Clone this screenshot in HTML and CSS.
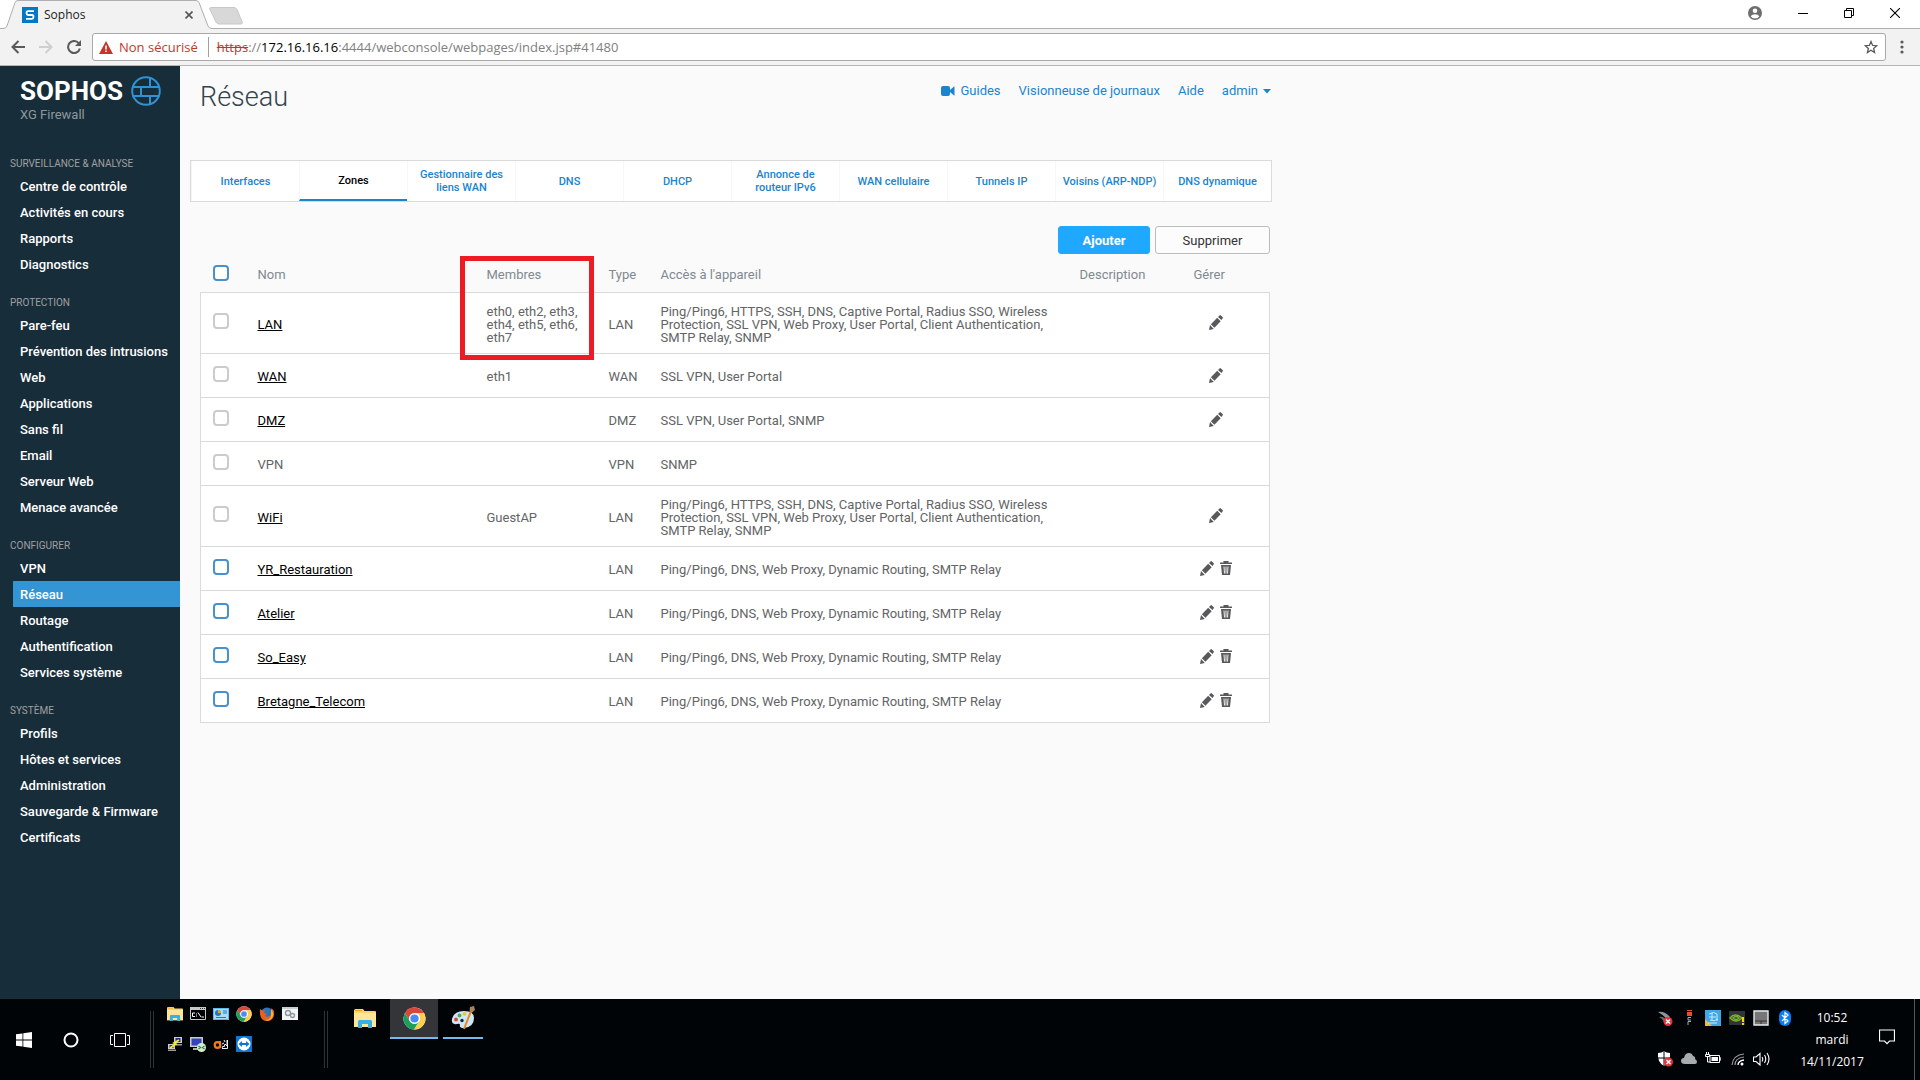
FILE: index.html
```html
<!DOCTYPE html>
<html lang="fr">
<head>
  <meta charset="UTF-8">
  <meta name="viewport" content="width=device-width, initial-scale=1.0">
  <title>Sophos</title>
  <link rel="stylesheet" href="styles.css">
</head>
<body>
  <svg class="defs" aria-hidden="true">
    <symbol id="pencil" viewBox="0 0 14 15"><path d="M0 15l1-5 3.800 4zM1.900 9.200l6.300-6.500 3.500 3.500-6.300 6.500zM9 1.900L10.500.4q.7-.6 1.400 0l1.700 1.700q.6.700 0 1.300L12.400 5z" fill="#58595b"/></symbol>
    <symbol id="trash" viewBox="0 0 12 14"><path d="M0 1.500h3.500V0h5v1.500H12V3H0z" fill="#58595b"/><path d="M1 4h10l-1 10H2z" fill="#58595b"/><path d="M4 5.500l.5 7M6 5.500v7M8 5.500l-.5 7" stroke="#fff" stroke-width=".9"/></symbol>
    <symbol id="chrome" viewBox="0 0 24 24"><circle cx="12" cy="12" r="11.500" fill="#fff"/><path d="M2 6.200A11.500 11.500 0 0 1 22 6.500H12A5.500 5.500 0 0 0 7 14.500z" fill="#d9463b"/><path d="M22 6.500A11.500 11.500 0 0 1 11.500 23.500L16.800 14.800A5.500 5.500 0 0 0 14.500 6.500z" fill="#fcd04b"/><path d="M2 6.200A11.500 11.500 0 0 0 11.500 23.500L16.500 15.200A5.500 5.500 0 0 1 7.200 14.800z" fill="#1d9e5a"/><circle cx="12" cy="12" r="5.500" fill="#fff"/><circle cx="12" cy="12" r="4.300" fill="#4a8af4"/></symbol>
    <symbol id="folder" viewBox="0 0 22 19"><path d="M0 1.500Q0 0 1.500 0H9l1.500 2H21q1 0 1 1v15H0z" fill="#fbd56b"/><path d="M0 4h22v14H0z" fill="#fde69a"/><path d="M1 1.500h7" stroke="#e5a91e"/><path d="M4 19v-6.500Q4 11 5.500 11h11q1.500 0 1.500 1.500V19h-4v-4H8v4z" fill="#35b1e8"/></symbol>
  </svg>

  <header class="browser">
    <div class="tabstrip">
      <svg class="tabshape" width="250" height="29" viewBox="0 0 250 29"><path d="M0 28.500H3Q6 28.500 7 26L16 2.500Q17 .5 19 .5H161Q163 .5 164 2.500L172 26Q173 28.500 176 28.500H250V29H0z" fill="none"/><path d="M0 28.500H3Q6 28.500 7 26L15 2.500Q16 .5 18 .5H196Q198 .5 199 2.500L208 26Q209 28.500 212 28.500V29H0z" fill="#f2f2f2"/><path d="M0 28.500H3Q6 28.500 7 26L15 2.500Q16 .5 18 .5H196Q198 .5 199 2.500L208 26Q209 28.500 212 28.500H250" fill="none" stroke="#afafaf"/><path d="M211 7.500h23q2 0 3 2l5 12q1 2.500-1 2.500h-22q-2 0-3-2l-6-12.500q-1-2 1-2z" fill="#d8d8d8" stroke="#c8c8c8"/></svg>
      <div class="tab">
        <svg width="16" height="16" viewBox="0 0 16 16"><path fill="#0078c8" d="M0 0h16v16H0z"/><path d="M12 4.200H6Q4.500 4.200 4.500 6T6 8h4q1.500 0 1.500 1.800T10 11.800H4" fill="none" stroke="#fff" stroke-width="1.800"/></svg>
        <span class="tab-title">Sophos</span>
        <button class="plain" aria-label="Fermer l'onglet"><svg width="8" height="8" viewBox="0 0 8 8"><path d="M.5.5l7 7M7.500.5l-7 7" stroke="#555" stroke-width="1.600"/></svg></button>
      </div>
      <div class="window-buttons">
        <button class="plain" aria-label="Profil"><svg width="14" height="14" viewBox="0 0 14 14"><circle cx="7" cy="7" r="7" fill="#6e6e6e"/><circle cx="7" cy="4.800" r="2.300" fill="#fff"/><path d="M2.600 10.200Q4 8.200 7 8.200T11.400 10.200Q9.800 12.400 7 12.400T2.600 10.200z" fill="#fff"/></svg></button>
        <button class="plain" aria-label="Réduire"><svg width="10" height="10" viewBox="0 0 10 10"><path d="M0 5.500h10" stroke="#000"/></svg></button>
        <button class="plain" aria-label="Restaurer"><svg width="10" height="10" viewBox="0 0 10 10"><path d="M.5 2.500h7v7h-7zM2.500 2.500v-2h7v7h-2" fill="none" stroke="#000"/></svg></button>
        <button class="plain" aria-label="Fermer"><svg width="10" height="10" viewBox="0 0 10 10"><path d="M0 0l10 10M10 0L0 10" stroke="#000" stroke-width="1.100"/></svg></button>
      </div>
    </div>
    <div class="toolbar">
      <button class="plain" aria-label="Précédent"><svg width="14" height="14" viewBox="0 0 14 14"><path d="M14 7H1.500M7.500 1L1.500 7l6 6" fill="none" stroke="#5a5a5a" stroke-width="2"/></svg></button>
      <button class="plain" aria-label="Suivant"><svg width="14" height="14" viewBox="0 0 14 14"><path d="M0 7h12.500M6.500 1l6 6-6 6" fill="none" stroke="#cfcfcf" stroke-width="2"/></svg></button>
      <button class="plain" aria-label="Actualiser"><svg width="14" height="14" viewBox="0 0 14 14"><path d="M12 3.500A6 6 0 1 0 12.900 8.500" fill="none" stroke="#5a5a5a" stroke-width="2"/><path d="M14 0v6H8z" fill="#5a5a5a"/></svg></button>
      <div class="address">
        <svg width="14" height="13" viewBox="0 0 14 13"><path d="M7 0l7 13H0z" fill="#c5352b"/><path d="M7 4.500v4M7 9.500v1.600" stroke="#fff" stroke-width="1.600"/></svg>
        <span class="insecure">Non sécurisé</span>
        <label class="url" for="url"><s>https</s>://<b>172.16.16.16</b></label>
        <input id="url" type="text" value=":4444/webconsole/webpages/index.jsp#41480">
        <button class="plain" aria-label="Favori"><svg width="14" height="14" viewBox="0 0 14 14"><path d="M7 1.500l1.600 3.900 4.200.3-3.200 2.700 1 4.100L7 10.300l-3.600 2.200 1-4.100L1.200 5.700l4.200-.3z" fill="none" stroke="#5a5a5a" stroke-width="1.300"/></svg></button>
      </div>
      <button class="plain" aria-label="Menu"><svg width="4" height="14" viewBox="0 0 4 14"><g fill="#5a5a5a"><circle cx="2" cy="2" r="1.600"/><circle cx="2" cy="7" r="1.600"/><circle cx="2" cy="12" r="1.600"/></g></svg></button>
    </div>
  </header>

  <div class="page">
    <aside class="sidebar">
      <div class="logo">
        <div>
          <div class="brand">SOPHOS</div>
          <div class="product">XG Firewall</div>
        </div>
        <svg width="30" height="30" viewBox="0 0 30 30"><g fill="none" stroke="#3092d2" stroke-width="2"><circle cx="15" cy="15" r="13.800"/><path d="M1.500 11h27M1.500 20h27M19 1.500V11M10 11v9M19 20v9"/></g></svg>
      </div>
      <nav>
        <h2>SURVEILLANCE &amp; ANALYSE</h2>
        <ul>
          <li><a href="#">Centre de contrôle</a></li>
          <li><a href="#">Activités en cours</a></li>
          <li><a href="#">Rapports</a></li>
          <li><a href="#">Diagnostics</a></li>
        </ul>
        <h2>PROTECTION</h2>
        <ul>
          <li><a href="#">Pare-feu</a></li>
          <li><a href="#">Prévention des intrusions</a></li>
          <li><a href="#">Web</a></li>
          <li><a href="#">Applications</a></li>
          <li><a href="#">Sans fil</a></li>
          <li><a href="#">Email</a></li>
          <li><a href="#">Serveur Web</a></li>
          <li><a href="#">Menace avancée</a></li>
        </ul>
        <h2>CONFIGURER</h2>
        <ul>
          <li><a href="#">VPN</a></li>
          <li class="on"><a href="#">Réseau</a></li>
          <li><a href="#">Routage</a></li>
          <li><a href="#">Authentification</a></li>
          <li><a href="#">Services système</a></li>
        </ul>
        <h2>SYSTÈME</h2>
        <ul>
          <li><a href="#">Profils</a></li>
          <li><a href="#">Hôtes et services</a></li>
          <li><a href="#">Administration</a></li>
          <li><a href="#">Sauvegarde &amp; Firmware</a></li>
          <li><a href="#">Certificats</a></li>
        </ul>
      </nav>
    </aside>

    <main class="content">
      <div class="head">
        <h1>Réseau</h1>
        <div class="links">
          <a href="#"><svg width="14" height="10" viewBox="0 0 14 10"><rect width="9" height="10" rx="2" fill="#1b84cf"/><path d="M9 4l4-3.500h.5v9H13L9 6z" fill="#1b84cf"/></svg>Guides</a>
          <a href="#">Visionneuse de journaux</a>
          <a href="#">Aide</a>
          <a href="#">admin<svg width="8" height="5" viewBox="0 0 8 5"><path d="M0 0h8L4 4.500z" fill="#1b84cf"/></svg></a>
        </div>
      </div>

      <nav class="tabs">
        <a href="#">Interfaces</a>
        <a href="#" class="on">Zones</a>
        <a href="#"><span>Gestionnaire des<br>liens WAN</span></a>
        <a href="#">DNS</a>
        <a href="#">DHCP</a>
        <a href="#"><span>Annonce de<br>routeur IPv6</span></a>
        <a href="#">WAN cellulaire</a>
        <a href="#">Tunnels IP</a>
        <a href="#">Voisins (ARP-NDP)</a>
        <a href="#">DNS dynamique</a>
      </nav>

      <div class="actions">
        <button class="btn primary">Ajouter</button>
        <button class="btn">Supprimer</button>
      </div>

      <table class="zones">
        <colgroup>
          <col class="c-check"><col class="c-name"><col class="c-members"><col class="c-type"><col class="c-access"><col class="c-desc"><col class="c-manage">
        </colgroup>
        <thead>
          <tr>
            <th><input type="checkbox" aria-label="Tout sélectionner"></th>
            <th>Nom</th>
            <th class="marked">Membres<span class="mark"></span></th>
            <th>Type</th>
            <th>Accès à l'appareil</th>
            <th>Description</th>
            <th class="manage-head">Gérer</th>
          </tr>
        </thead>
        <tbody>
          <tr>
            <td><input type="checkbox" disabled aria-label="LAN"></td>
            <td><a href="#">LAN</a></td>
            <td>eth0, eth2, eth3, eth4, eth5, eth6, eth7</td>
            <td>LAN</td>
            <td>Ping/Ping6, HTTPS, SSH, DNS, Captive Portal, Radius SSO, Wireless Protection, SSL VPN, Web Proxy, User Portal, Client Authentication, SMTP Relay, SNMP</td>
            <td></td>
            <td class="manage"><button class="plain" aria-label="Modifier"><svg width="14" height="15"><use href="#pencil"/></svg></button></td>
          </tr>
          <tr>
            <td><input type="checkbox" disabled aria-label="WAN"></td>
            <td><a href="#">WAN</a></td>
            <td>eth1</td>
            <td>WAN</td>
            <td>SSL VPN, User Portal</td>
            <td></td>
            <td class="manage"><button class="plain" aria-label="Modifier"><svg width="14" height="15"><use href="#pencil"/></svg></button></td>
          </tr>
          <tr>
            <td><input type="checkbox" disabled aria-label="DMZ"></td>
            <td><a href="#">DMZ</a></td>
            <td></td>
            <td>DMZ</td>
            <td>SSL VPN, User Portal, SNMP</td>
            <td></td>
            <td class="manage"><button class="plain" aria-label="Modifier"><svg width="14" height="15"><use href="#pencil"/></svg></button></td>
          </tr>
          <tr>
            <td><input type="checkbox" disabled aria-label="VPN"></td>
            <td>VPN</td>
            <td></td>
            <td>VPN</td>
            <td>SNMP</td>
            <td></td>
            <td></td>
          </tr>
          <tr>
            <td><input type="checkbox" disabled aria-label="WiFi"></td>
            <td><a href="#">WiFi</a></td>
            <td>GuestAP</td>
            <td>LAN</td>
            <td>Ping/Ping6, HTTPS, SSH, DNS, Captive Portal, Radius SSO, Wireless Protection, SSL VPN, Web Proxy, User Portal, Client Authentication, SMTP Relay, SNMP</td>
            <td></td>
            <td class="manage"><button class="plain" aria-label="Modifier"><svg width="14" height="15"><use href="#pencil"/></svg></button></td>
          </tr>
          <tr>
            <td><input type="checkbox" aria-label="YR_Restauration"></td>
            <td><a href="#">YR_Restauration</a></td>
            <td></td>
            <td>LAN</td>
            <td>Ping/Ping6, DNS, Web Proxy, Dynamic Routing, SMTP Relay</td>
            <td></td>
            <td class="manage"><button class="plain" aria-label="Modifier"><svg width="14" height="15"><use href="#pencil"/></svg></button><button class="plain" aria-label="Supprimer"><svg width="12" height="14"><use href="#trash"/></svg></button></td>
          </tr>
          <tr>
            <td><input type="checkbox" aria-label="Atelier"></td>
            <td><a href="#">Atelier</a></td>
            <td></td>
            <td>LAN</td>
            <td>Ping/Ping6, DNS, Web Proxy, Dynamic Routing, SMTP Relay</td>
            <td></td>
            <td class="manage"><button class="plain" aria-label="Modifier"><svg width="14" height="15"><use href="#pencil"/></svg></button><button class="plain" aria-label="Supprimer"><svg width="12" height="14"><use href="#trash"/></svg></button></td>
          </tr>
          <tr>
            <td><input type="checkbox" aria-label="So_Easy"></td>
            <td><a href="#">So_Easy</a></td>
            <td></td>
            <td>LAN</td>
            <td>Ping/Ping6, DNS, Web Proxy, Dynamic Routing, SMTP Relay</td>
            <td></td>
            <td class="manage"><button class="plain" aria-label="Modifier"><svg width="14" height="15"><use href="#pencil"/></svg></button><button class="plain" aria-label="Supprimer"><svg width="12" height="14"><use href="#trash"/></svg></button></td>
          </tr>
          <tr>
            <td><input type="checkbox" aria-label="Bretagne_Telecom"></td>
            <td><a href="#">Bretagne_Telecom</a></td>
            <td></td>
            <td>LAN</td>
            <td>Ping/Ping6, DNS, Web Proxy, Dynamic Routing, SMTP Relay</td>
            <td></td>
            <td class="manage"><button class="plain" aria-label="Modifier"><svg width="14" height="15"><use href="#pencil"/></svg></button><button class="plain" aria-label="Supprimer"><svg width="12" height="14"><use href="#trash"/></svg></button></td>
          </tr>
        </tbody>
      </table>
    </main>
  </div>

  <footer class="taskbar">
    <div class="system">
      <button class="plain" aria-label="Démarrer"><svg width="16" height="16" viewBox="0 0 16 16"><path d="M0 2.300l6.500-.9v6.100H0zM7.300 1.200L16 0v7.500H7.300zM0 8.400h6.500v6.200L0 13.700zM7.300 8.400H16V16l-8.700-1.200z" fill="#fff"/></svg></button>
      <button class="plain" aria-label="Cortana"><svg width="16" height="16" viewBox="0 0 16 16"><circle cx="8" cy="8" r="6.500" fill="none" stroke="#fff" stroke-width="2"/></svg></button>
      <button class="plain" aria-label="Vue des tâches"><svg width="20" height="14" viewBox="0 0 20 14"><path d="M4.500.5h11v13h-11zM3 2.500H.5v9H3M17 2.500h2.500v9H17" fill="none" stroke="#fff"/></svg></button>
    </div>
    <div class="grip"></div>
    <div class="quick">
      <svg width="16" height="16"><use href="#folder"/></svg>
      <svg width="16" height="16" viewBox="0 0 16 16"><path d="M.5 1.500h15v12H.5z" fill="#000" stroke="#c8c8c8"/><path d="M0 1h16v3H0z" fill="#c8c8c8"/><path d="M10 2.500h1M12 2.500h1M14 2.500h1" stroke="#333"/><path d="M5 7H2.500v3.500H5M6.500 7.500v1M6.500 9.500v1M8 6.500l3 4.500M11.500 11H14" fill="none" stroke="#fff"/></svg>
      <svg width="16" height="16" viewBox="0 0 16 16"><path d="M0 2h16v12H0z" fill="#59b7f3"/><path d="M1 3h14v10H1z" fill="#a7dcfa"/><circle cx="5" cy="7" r="3" fill="#2475c5"/><path d="M5 7V4a3 3 0 0 1 3 3z" fill="#f0a52d"/><path d="M10 5h4M10 7h4M3 11.500h10" stroke="#197bc4" stroke-width="1.200"/></svg>
      <svg width="16" height="16"><use href="#chrome"/></svg>
      <svg width="16" height="16" viewBox="0 0 16 16"><circle cx="8" cy="8" r="6.500" fill="#2c73bd"/><path d="M1 3L4 5l2-1-1 3 3 1-2 2q3 2 6-1 2-3 0-7 4 2 3 7-1 6-7 6Q0 15 1 3z" fill="#e8601b"/><path d="M12 3q4 4 1 9-3 4-7 2 5 0 6-4z" fill="#f7b32c"/></svg>
      <svg width="16" height="16" viewBox="0 0 16 16"><path d="M0 1h16v13H0z" fill="#f4f4f4"/><path d="M0 1h16v2H0z" fill="#c9ced2"/><g fill="none" stroke="#8c969c" stroke-width="1.400"><circle cx="6" cy="7" r="2.500"/><circle cx="10.500" cy="9.500" r="2"/></g></svg>
      <svg width="16" height="16" viewBox="0 0 16 16"><path d="M7 1h8v6H7zM1 8h7v5H1z" fill="#ccc"/><path d="M8.500 2h5v4h-5zM2.500 9h4v3h-4z" fill="#1d2f93"/><path d="M9 8h6v1.500H9zM1 13.500h8V15H1z" fill="#999"/><path d="M12 4L7 7l2 1-6 4" fill="none" stroke="#f5ed22" stroke-width="1.800"/></svg>
      <svg width="16" height="16" viewBox="0 0 16 16"><path d="M0 1h13v10H0z" fill="#c7cbd2"/><path d="M1.500 2.500h10v7h-10z" fill="#3544bd"/><path d="M3 12h7v2H3z" fill="#aaa"/><circle cx="11.500" cy="11.500" r="4.500" fill="#d8ead5"/><path d="M8.500 10l2 1.500-2 1.500M14.500 10l-2 1.500 2 1.500" fill="none" stroke="#24872b" stroke-width="1.200"/></svg>
      <svg width="16" height="16" viewBox="0 0 16 16"><circle cx="4.500" cy="9" r="2.800" fill="none" stroke="#ee7b20" stroke-width="2.200"/><path d="M7 5v7" stroke="#ee7b20" stroke-width="2"/><path d="M9 12l1-2 1 1 1-3 2 2V4M9 8l2-1M11 4l1 2M9 12.500h5.500V4" fill="none" stroke="#eee"/></svg>
      <svg width="16" height="16" viewBox="0 0 16 16"><path d="M0 0h16v16H0z" fill="#0e76d3"/><circle cx="8" cy="8" r="6.500" fill="#fff"/><path d="M2.500 8L6 5v2h4V5l3.500 3L10 11V9H6v2z" fill="#0e76d3"/></svg>
    </div>
    <div class="grip"></div>
    <div class="apps">
      <button class="app" aria-label="Explorateur"><svg width="22" height="19"><use href="#folder"/></svg></button>
      <button class="app active" aria-label="Chrome"><svg width="23" height="23"><use href="#chrome"/></svg></button>
      <button class="app running" aria-label="Paint"><svg width="24" height="24" viewBox="0 0 24 24"><path d="M1 13Q3 5 13 5q10 0 10 7 0 9-10 10-5 0-4-3 0-2-3-1-6 1-5-5z" fill="#cfe6f5"/><circle cx="8.500" cy="9.500" r="1.900" fill="#4eae49"/><circle cx="13.500" cy="7.800" r="1.900" fill="#f3c22c"/><circle cx="5" cy="13.500" r="1.900" fill="#dc453c"/><circle cx="11" cy="14.500" r="1.700" fill="#12263a"/><path d="M20 5l-7 18" stroke="#e88a22" stroke-width="2"/><path d="M18.500 5.500L19 1l4-1 1 4-3.500 3z" fill="#a9825c"/></svg></button>
    </div>
    <div class="tray">
      <svg width="16" height="16" viewBox="0 0 16 16"><path d="M1 2q7-1 12 5l-2 4Q8 6 1 2z" fill="#8b949a"/><path d="M2 7q5-1 8 4L7 12Q6 9 2 7z" fill="#5b666e"/><circle cx="11" cy="11.500" r="4.500" fill="#e2333c"/><path d="M9 9.500l4 4M13 9.500l-4 4" stroke="#fff" stroke-width="1.500"/></svg>
      <svg width="16" height="16" viewBox="0 0 16 16"><path d="M6 0h5v1H6zM6 2h5v4H6z" fill="#e2502c"/><path d="M10 7.500H7v2.500h3M10 11.500H7V15" fill="none" stroke="#aaa"/></svg>
      <svg width="16" height="16" viewBox="0 0 16 16"><path d="M0 0h16v16H0z" fill="#41a6e3"/><path d="M0 9l7 7H0z" fill="#efb740"/><path d="M4 4q5-3 8 0M4 7h7M5 10q4 2 8-1M7 3v8M12 4v7M3 13h9" fill="none" stroke="#c9ecff"/></svg>
      <svg width="16" height="16" viewBox="0 0 16 16"><path d="M0 1h16v14H0z" fill="#2f3436"/><path d="M1 8q5-6 12 0-6 6-12 0zM4 8q3-3 6 0-3 3-6 0z" fill="none" stroke="#7db42c" stroke-width="1.400"/><path d="M13 7h2v5h-2zM13 13h2v2h-2z" fill="#ffd400"/></svg>
      <svg width="16" height="16" viewBox="0 0 16 16"><path d="M1 1h14v14H1z" fill="#777" stroke="#e7ebef" stroke-width="1.400"/><path d="M2 11h12M8 11v3" stroke="#333"/></svg>
      <svg width="16" height="16" viewBox="0 0 16 16"><rect x="2" width="12" height="16" rx="6" fill="#0a7cf0"/><path d="M5 5l6 6-3 2.500v-11L11 5l-6 6" fill="none" stroke="#fff" stroke-width="1.200"/></svg>
      <svg width="16" height="16" viewBox="0 0 16 16"><path d="M1 2q4 0 6-2 2 2 6 2 1 9-6 13Q0 11 1 2z" fill="#fff"/><path d="M7 0v15M1 7h12" stroke="#05080b"/><circle cx="11.500" cy="11" r="4.500" fill="#e2333c"/><path d="M9.500 9l4 4M13.500 9l-4 4" stroke="#fff" stroke-width="1.500"/></svg>
      <svg width="16" height="16" viewBox="0 0 16 16"><path d="M4 13q-4 0-4-3t3-3q1-5 5-5 3 0 4 3 3 1 2 3 2 1 2 3t-2 2z" fill="#a9acae"/></svg>
      <svg width="16" height="16" viewBox="0 0 16 16"><path d="M5 4.500h9.500v7H5z" fill="none" stroke="#fff"/><path d="M6.500 6h6.500v4H6.500z" fill="#fff"/><path d="M15 7h1v2h-1M1.500 1v2M3.500 1v2M.5 3.500h4v2h-4zM2.500 6v5H5" fill="none" stroke="#fff"/></svg>
      <svg width="16" height="16" viewBox="0 0 16 16"><g fill="none" stroke="#999" stroke-width="1.200"><path d="M3 14Q4 4 15 3"/><path d="M6 14q0-7 9-8"/></g><path d="M9 14q0-4 6-5" fill="none" stroke="#fff" stroke-width="1.300"/><circle cx="13" cy="13" r="1.500" fill="#fff"/></svg>
      <svg width="17" height="16" viewBox="0 0 17 16"><path d="M.5 6v4.500H3l4 3.500V2.500L3 6zM9 6q1.500 2 0 4.500M11.500 4q2.500 4 0 8M14 2q4 6 0 12" fill="none" stroke="#fff" stroke-width="1.100"/></svg>
    </div>
    <div class="clock"><span>10:52</span><span>mardi</span><span>14/11/2017</span></div>
    <button class="plain notif" aria-label="Centre de notifications"><svg width="16" height="16" viewBox="0 0 16 16"><path d="M.5 1h15v11h-5L8 14.700 5.500 12h-5z" fill="none" stroke="#fff" stroke-width="1.200"/></svg></button>
  </footer>
</body>
</html>
```
FILE: styles.css
```css
*{margin:0;padding:0;box-sizing:border-box;}
ul{list-style:none;}
a{text-decoration:none;color:inherit;}
html,body{height:100%;}
body{display:flex;flex-direction:column;background:#fafafa;font-family:Roboto,"Liberation Sans",sans-serif;font-size:13px;color:#636466;}
svg{display:block;flex:none;}
.defs{position:absolute;width:0;height:0;}
.plain{display:block;border:0;background:none;flex:none;}

/* browser */
.browser{flex:none;font-family:"Open Sans","Noto Sans",sans-serif;}
.tabstrip{position:relative;display:flex;justify-content:space-between;height:29px;background:#fff;border-bottom:1px solid #afafaf;}
.tabshape{position:absolute;left:0;top:0;}
.tab{position:relative;display:flex;align-items:center;gap:6px;width:215px;padding:2px 22px 0;}
.tab-title{flex:1;font-size:12px;line-height:16px;color:#222;}
.window-buttons{display:flex;align-items:center;gap:36px;padding:0 20px 3px 0;}
.toolbar{display:flex;align-items:center;gap:14px;height:37px;padding:0 16px 0 11px;background:#f2f2f2;border-bottom:1px solid #b6b6b6;}
.address{flex:1;display:flex;align-items:center;height:28px;margin-left:-3px;padding:0 7px 0 6px;border:1px solid #a9a9a9;border-radius:3px;background:#fff;font-size:13px;line-height:20px;}
.insecure{margin:0 8px 0 6px;padding-right:10px;border-right:1px solid #a0a0a0;color:#c5352b;}
.url{color:#808080;}
.url s{color:#c5352b;}
.url b{font-weight:400;color:#000;}
.address input{flex:1;min-width:0;border:0;outline:0;background:none;font:inherit;color:#808080;}

/* sidebar */
.page{flex:1;display:flex;}
.sidebar{flex:none;width:180px;background:#182d3a;}
.logo{display:flex;gap:8px;height:87px;padding:10px 0 0 20px;}
.brand{font-size:26px;line-height:31px;font-weight:700;color:#fff;}
.product{font-size:13px;line-height:16px;color:#8d989f;}
.sidebar h2{padding:2px 0 0 10px;font-size:10px;line-height:18px;font-weight:400;color:#a0a0a0;}
.sidebar ul{margin-bottom:15px;}
.sidebar li{margin-left:13px;padding:2px 0 0 7px;line-height:24px;font-weight:500;color:#fff;white-space:nowrap;}
.sidebar li.on{background:#3395d4;}

/* content */
.content{flex:1;max-width:1092px;padding-left:10px;}
.head{display:flex;justify-content:space-between;height:94px;padding:11px 1px 0 10px;}
.head h1{font-size:27px;line-height:40px;font-weight:300;color:#34434d;}
.links{display:flex;gap:18px;line-height:28px;color:#1b84cf;}
.links a{display:flex;align-items:center;gap:5px;height:28px;}
.tabs{display:grid;grid-template-columns:repeat(10,1fr);height:42px;border:1px solid #d9dadc;background:#fff;}
.tabs a{display:flex;align-items:center;justify-content:center;border-left:1px solid #f7f7f7;text-align:center;white-space:nowrap;font-size:11px;line-height:13px;font-weight:500;color:#1b84cf;}
.tabs a.on{border-bottom:2px solid #1b84cf;color:#000;}
.actions{display:flex;justify-content:flex-end;gap:5px;padding:24px 2px 0 0;}
.btn{width:115px;height:28px;border:1px solid #bcbcbc;border-radius:3px;background:#fcfcfc;font:13px Roboto,"Liberation Sans",sans-serif;color:#333;}
.btn.primary{width:92px;border-color:#1fa8ff;background:#1fa8ff;font-weight:700;color:#fff;}

.zones{width:1070px;max-width:100%;margin-left:10px;table-layout:fixed;border-collapse:collapse;}
.c-check{width:50px;}
.c-name{width:229px;}
.c-members{width:122px;}
.c-type{width:52px;}
.c-access{width:419px;}
.c-desc{width:89px;}
.zones th{height:38px;padding:4px 7px 0;text-align:left;font-weight:400;color:#7f8990;}
.zones td{height:44px;padding:12px 7px 9px;line-height:13px;}
.zones tbody tr{border:1px solid #d9dadc;background:#fff;}
.zones td:nth-child(3){padding-right:0;}
.zones td:nth-child(5){padding-right:16px;}
.zones th:first-child{padding:0 0 0 12px;}
.zones td:first-child{padding:9px 0 12px 12px;}
.zones td a{color:#000;text-decoration:underline;}
.zones .manage{padding:10px 7px 10px 9px;text-align:center;}
.zones .manage .plain{display:inline-block;margin:0 3px;vertical-align:middle;}
.zones .manage-head{padding-left:32px;}
.zones input{display:block;appearance:none;width:16px;height:16px;border:2px solid #4a90cc;border-radius:4px;background:#fff;}
.zones input:disabled{border-color:#cbcbcb;}
.marked{position:relative;}
.mark{position:absolute;left:-20px;top:2px;width:134px;height:104px;border:5px solid #ed1c24;}

/* taskbar */
.taskbar{flex:none;display:flex;height:81px;background:#010407;color:#fff;font-family:"Open Sans","Noto Sans",sans-serif;}
.system{display:flex;align-items:center;justify-content:space-between;width:150px;padding:0 20px 0 16px;}
.grip{flex:none;width:4px;margin:12px 0;border:solid #303336;border-width:0 1px;}
.quick{display:grid;grid-template-columns:repeat(6,16px);grid-auto-rows:16px;gap:14px 7px;width:170px;padding:7px 0 0 13px;}
.apps{display:flex;gap:5px;padding-left:17px;}
.app{display:flex;align-items:center;justify-content:center;width:40px;height:40px;border:0;border-bottom:2px solid transparent;background:none;}
.app.active{width:48px;background:#333539;border-color:#76b9ed;}
.app.running{border-color:#76b9ed;}
.tray{display:grid;grid-template-columns:repeat(6,16px);grid-auto-rows:16px;gap:25px 8px;margin-left:auto;padding-top:11px;}
.tray svg:nth-child(7){grid-column:1;}
.clock{display:flex;flex-direction:column;width:78px;padding-top:8px;text-align:center;font-size:12px;line-height:22px;}
.notif{width:43px;padding:30px 0 0 8px;align-self:flex-start;}
.taskbar::after{content:"";width:5px;border-left:1px solid #55585b;}
```
